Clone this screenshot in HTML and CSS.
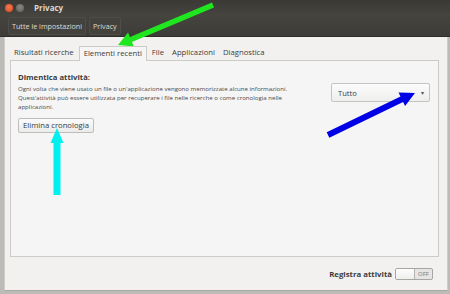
FILE: index.html
```html
<!DOCTYPE html>
<html lang="it">
<head>
<meta charset="utf-8">
<title>Privacy</title>
<link rel="stylesheet" href="styles.css">
</head>
<body>
<div class="window">
  <div class="titlebar">
    <span class="wbtn close"></span>
    <span class="wbtn min"></span>
    <span class="title">Privacy</span>
  </div>
  <div class="toolbar">
    <span class="crumb">Tutte le impostazioni</span>
    <span class="crumb">Privacy</span>
  </div>
  <div class="body">
    <div class="tabs">
      <span class="tab">Risultati ricerche</span>
      <span class="tab active">Elementi recenti</span>
      <span class="tab">File</span>
      <span class="tab">Applicazioni</span>
      <span class="tab">Diagnostica</span>
    </div>
    <div class="panel">
      <div class="row">
        <div class="info">
          <div class="heading">Dimentica attività:</div>
          <p class="desc">Ogni volta che viene usato un file o un'applicazione vengono memorizzate alcune informazioni.<br>Quest'attività può essere utilizzata per recuperare i file nelle ricerche o come cronologia nelle<br>applicazioni.</p>
          <button class="btn">Elimina cronologia</button>
        </div>
        <div class="combo"><span>Tutto</span><span class="caret">▾</span></div>
      </div>
    </div>
    <div class="footer">
      <span class="flabel">Registra attività</span>
      <span class="switch"><span class="knob"></span><span class="off">OFF</span></span>
    </div>
  </div>
  <div class="bottom"></div>
  <svg class="arrows" width="450" height="294" viewBox="0 0 450 294">
    <polygon fill="#1fe61f" transform="translate(213,5) rotate(157.2)" points="0,-2.6 89,-2.6 89,-7.5 103,0 89,7.5 89,2.6 0,2.6"/>
    <polygon fill="#0000e6" transform="translate(328,135) rotate(-25.8)" points="0,-3 82,-3 82,-7.5 96.6,0 82,7.5 82,3 0,3"/>
    <polygon fill="#00f0f0" transform="translate(57,195) rotate(-90)" points="0,-3.5 52,-3.5 52,-6.5 67,0 52,6.5 52,3.5 0,3.5"/>
  </svg>
</div>
</body>
</html>
```

FILE: styles.css
```css
* { box-sizing: border-box; }
html, body { margin: 0; padding: 0; }
body {
  width: 450px;
  height: 294px;
  overflow: hidden;
  font-family: "Open Sans", "DejaVu Sans", sans-serif;
  background: #bdbbb7;
}
.window {
  position: relative;
  width: 450px;
  height: 294px;
  display: flex;
  flex-direction: column;
}
.titlebar {
  height: 15px;
  flex: none;
  display: flex;
  align-items: center;
  padding-left: 5px;
  gap: 3px;
  background: linear-gradient(#3a3935, #45443f);
}
.wbtn {
  width: 8px;
  height: 8px;
  border-radius: 50%;
}
.wbtn.close { background: radial-gradient(circle at 50% 40%, #f47a52, #d9461e); }
.wbtn.min { background: radial-gradient(circle at 50% 40%, #8a8883, #5e5c57); }
.title {
  margin-left: 7px;
  font-size: 8px;
  font-weight: bold;
  color: #dcd8cf;
}
.toolbar {
  height: 22px;
  flex: none;
  display: flex;
  align-items: center;
  gap: 3px;
  padding-left: 8px;
  background: linear-gradient(#45443f, #3d3c38);
  border-bottom: 1px solid #2e2d2a;
}
.crumb {
  font-size: 7.2px;
  color: #dedbd5;
  padding: 3px 3px;
  border: 1px solid #4e4d48;
  background: #43423d;
  border-radius: 2px;
}
.body {
  flex: 1;
  display: flex;
  flex-direction: column;
  background: #f2f1f0;
  margin: 0 2px 0 4px;
  border-left: 1px solid #cfcdc9;
  border-right: 1px solid #cfcdc9;
  border-bottom: 1px solid #a9a7a3;
  padding: 8px 8px 0 5px;
}
.tabs {
  display: flex;
  align-items: flex-end;
  height: 15px;
  flex: none;
}
.tab {
  font-size: 7.7px;
  color: #3c3c3c;
  padding: 0 4px;
  height: 14px;
  line-height: 13px;
  white-space: nowrap;
}
.tab.active {
  background: #f5f5f5;
  border: 1px solid #cdcbc8;
  border-bottom: none;
  height: 15px;
  margin-bottom: -1px;
  position: relative;
  z-index: 1;
  margin-left: 1px;
  margin-right: 1px;
}
.panel {
  height: 197px;
  flex: none;
  background: #f5f5f5;
  border: 1px solid #cdcbc8;
  padding: 11px 8px 0 7px;
}
.row {
  display: flex;
  justify-content: space-between;
  align-items: flex-start;
}
.heading {
  font-size: 7.7px;
  font-weight: bold;
  color: #3c3c3c;
  line-height: 10px;
}
.desc {
  margin: 2px 0 0;
  font-size: 6.1px;
  line-height: 9px;
  color: #4a4a4a;
}
.btn {
  margin-top: 2px;
  font-family: inherit;
  font-size: 7.7px;
  color: #3c3c3c;
  height: 15px;
  padding: 0 4px;
  border: 1px solid #bfbdba;
  border-radius: 2px;
  background: linear-gradient(#fbfbfb, #ebebea);
}
.combo {
  margin-top: 11px;
  width: 99px;
  height: 19px;
  display: flex;
  align-items: center;
  justify-content: space-between;
  padding: 0 5px 0 6px;
  font-size: 7.6px;
  color: #3c3c3c;
  border: 1px solid #c6c4c1;
  border-radius: 2px;
  background: linear-gradient(#fcfcfc, #eeeeed);
}
.caret { font-size: 6px; color: #555; }
.footer {
  flex: 1;
  display: flex;
  align-items: center;
  justify-content: flex-end;
  gap: 3px;
  padding-right: 6px;
}
.flabel {
  font-size: 7.8px;
  font-weight: bold;
  color: #3c3c3c;
}
.switch {
  width: 38px;
  height: 12px;
  display: flex;
  border: 1px solid #a8a6a2;
  border-radius: 2px;
  background: #e6e5e3;
  overflow: hidden;
}
.knob {
  width: 19px;
  background: linear-gradient(#fdfdfd, #eeeeed);
  border-right: 1px solid #b5b3b0;
}
.off {
  flex: 1;
  font-size: 6px;
  color: #777;
  text-align: center;
  line-height: 10px;
}
.bottom {
  height: 3px;
  flex: none;
  background: #bdbbb7;
}
.arrows {
  position: absolute;
  left: 0;
  top: 0;
  pointer-events: none;
}
```
